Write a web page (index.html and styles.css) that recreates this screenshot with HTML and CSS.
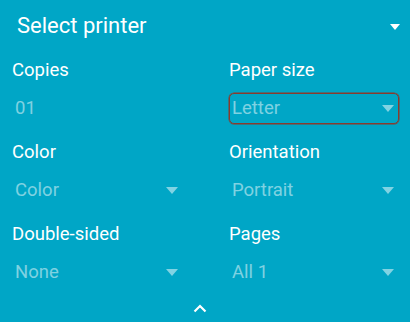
FILE: index.html
```html
<!DOCTYPE html>
<html lang="en">
<head>
    <meta charset="UTF-8">
    <meta name="viewport" content="width=device-width, initial-scale=1.0">
    <title>Print options</title>
    <link rel="stylesheet" href="styles.css">
</head>
<body>
    <div class="panel">
        <div class="header">
            <span class="header-title">Select printer</span>
            <span class="arrow arrow-white"></span>
        </div>

        <div class="options">
            <div class="field">
                <div class="field-label">Copies</div>
                <div class="field-value">01</div>
            </div>
            <div class="field">
                <div class="field-label">Paper size</div>
                <div class="field-value spinner focused">
                    <span>Letter</span>
                    <span class="arrow"></span>
                </div>
            </div>

            <div class="field">
                <div class="field-label">Color</div>
                <div class="field-value spinner">
                    <span>Color</span>
                    <span class="arrow"></span>
                </div>
            </div>
            <div class="field">
                <div class="field-label">Orientation</div>
                <div class="field-value spinner">
                    <span>Portrait</span>
                    <span class="arrow"></span>
                </div>
            </div>

            <div class="field">
                <div class="field-label">Double-sided</div>
                <div class="field-value spinner">
                    <span>None</span>
                    <span class="arrow"></span>
                </div>
            </div>
            <div class="field">
                <div class="field-label">Pages</div>
                <div class="field-value spinner">
                    <span>All 1</span>
                    <span class="arrow"></span>
                </div>
            </div>
        </div>

        <div class="collapse">
            <svg width="14" height="9" viewBox="0 0 14 9">
                <path d="M1.5 7.5 L7 2 L12.5 7.5" fill="none" stroke="#fff" stroke-width="2.2"/>
            </svg>
        </div>
    </div>
</body>
</html>
```

FILE: styles.css
```css
* {
    margin: 0;
    padding: 0;
    box-sizing: border-box;
}

body {
    font-family: Roboto, 'Noto Sans', sans-serif;
    background: #00a6c6;
    color: #fff;
    width: 410px;
    height: 322px;
    overflow: hidden;
}

.panel {
    display: flex;
    flex-direction: column;
    height: 322px;
}

.header {
    display: flex;
    align-items: center;
    justify-content: space-between;
    height: 52px;
    padding: 0 10px 0 17px;
}

.header-title {
    font-size: 22px;
    line-height: 52px;
}

.arrow {
    width: 0;
    height: 0;
    border-left: 6.5px solid transparent;
    border-right: 6.5px solid transparent;
    border-top: 7px solid rgba(255, 255, 255, 0.5);
}

.arrow-white {
    border-left-width: 5.5px;
    border-right-width: 5.5px;
    border-top: 6px solid #fff;
    margin-top: 2px;
}

.options {
    display: grid;
    grid-template-columns: 171px 170px;
    column-gap: 46px;
    padding: 0 11px 0 12px;
    margin-top: 6px;
}

.field {
    height: 82px;
}

.field-label {
    font-size: 18.5px;
    line-height: 25px;
    height: 25px;
}

.field-value {
    margin-top: 10px;
    height: 31px;
    line-height: 29px;
    font-size: 18.5px;
    color: rgba(255, 255, 255, 0.5);
    border: 1px solid transparent;
    border-radius: 5px;
    padding: 0 4px 0 2px;
}

.spinner {
    display: flex;
    align-items: center;
    justify-content: space-between;
}

.focused {
    border-color: #8a3b2d;
    box-shadow: 0 0 0 0.5px #8a3b2d;
}

.collapse {
    display: flex;
    justify-content: center;
    padding-right: 10px;
}
```
